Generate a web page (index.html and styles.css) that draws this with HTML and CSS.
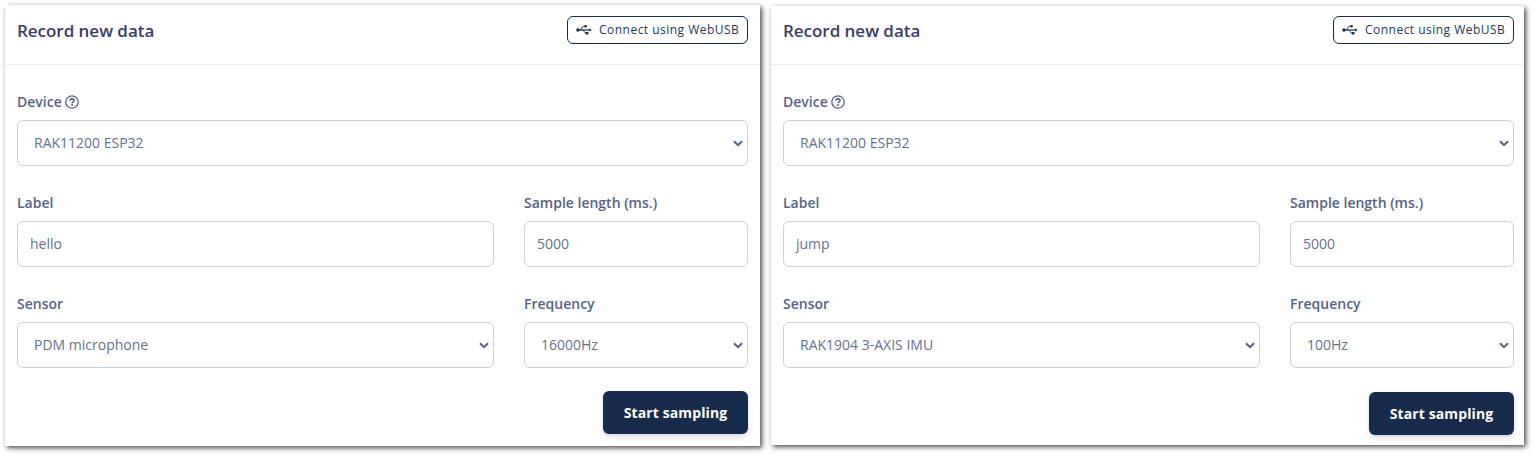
FILE: index.html
```html
<!DOCTYPE html>
<html lang="en">
<head>
<meta charset="utf-8">
<title>Record new data</title>
<link rel="stylesheet" href="styles.css">
</head>
<body>
<svg class="defs" aria-hidden="true">
  <symbol id="usb" viewBox="0 0 16 12">
    <path d="M1.5 6H14" fill="none" stroke="currentColor" stroke-width="1.2"/>
    <path d="M4 6C6 6 5.4 2.3 7.5 2.3H9.5M6.5 6C8.5 6 7.9 9.2 10 9.2H11" fill="none" stroke="currentColor" stroke-width=".9"/>
    <circle cx="1.9" cy="6" r="1.7" fill="currentColor"/>
    <circle cx="9.6" cy="2.3" r="1.3" fill="currentColor"/>
    <path d="M9.8 7.9h2.6v2.6H9.8zM13.2 4.4L15.9 6L13.2 7.6z" fill="currentColor"/>
  </symbol>
  <symbol id="help" viewBox="0 0 14 14">
    <circle cx="7" cy="7" r="6.2" fill="none" stroke="currentColor" stroke-width="1.3"/>
    <path d="M5.1 5.6C5.2 3.3 9 3.4 9 5.5C9 6.8 7.1 6.8 7.1 8.2" fill="none" stroke="currentColor" stroke-width="1.6"/>
    <circle cx="7.1" cy="10.1" r="1" fill="currentColor"/>
  </symbol>
  <symbol id="chevron" viewBox="0 0 10 7">
    <path d="M1 1.2L5 5.2L9 1.2" fill="none" stroke="currentColor" stroke-width="2"/>
  </symbol>
</svg>
<main class="panels">
  <section class="card">
    <header class="card-header">
      <h2 class="title">Record new data</h2>
      <button class="connect"><svg class="usb"><use href="#usb"/></svg>Connect using WebUSB</button>
    </header>
    <div class="form">
      <div class="field wide">
        <div class="label">Device <svg class="help"><use href="#help"/></svg></div>
        <div class="control select">RAK11200 ESP32<svg class="chevron"><use href="#chevron"/></svg></div>
      </div>
      <div class="field">
        <div class="label">Label</div>
        <div class="control">hello</div>
      </div>
      <div class="field">
        <div class="label">Sample length (ms.)</div>
        <div class="control">5000</div>
      </div>
      <div class="field">
        <div class="label">Sensor</div>
        <div class="control select">PDM microphone<svg class="chevron"><use href="#chevron"/></svg></div>
      </div>
      <div class="field">
        <div class="label">Frequency</div>
        <div class="control select">16000Hz<svg class="chevron"><use href="#chevron"/></svg></div>
      </div>
    </div>
    <footer class="actions"><button class="start">Start sampling</button></footer>
  </section>
  <section class="card second">
    <header class="card-header">
      <h2 class="title">Record new data</h2>
      <button class="connect"><svg class="usb"><use href="#usb"/></svg>Connect using WebUSB</button>
    </header>
    <div class="form">
      <div class="field wide">
        <div class="label">Device <svg class="help"><use href="#help"/></svg></div>
        <div class="control select">RAK11200 ESP32<svg class="chevron"><use href="#chevron"/></svg></div>
      </div>
      <div class="field">
        <div class="label">Label</div>
        <div class="control">jump</div>
      </div>
      <div class="field">
        <div class="label">Sample length (ms.)</div>
        <div class="control">5000</div>
      </div>
      <div class="field">
        <div class="label">Sensor</div>
        <div class="control select">RAK1904 3-AXIS IMU<svg class="chevron"><use href="#chevron"/></svg></div>
      </div>
      <div class="field">
        <div class="label">Frequency</div>
        <div class="control select">100Hz<svg class="chevron"><use href="#chevron"/></svg></div>
      </div>
    </div>
    <footer class="actions"><button class="start">Start sampling</button></footer>
  </section>
</main>
</body>
</html>
```
FILE: styles.css
```css
* { box-sizing: border-box; }
body {
  margin: 0;
  min-height: 100vh;
  background: #fff;
  color: #566386;
  font: 14px/20px "Open Sans", sans-serif;
}
.defs { display: none; }
.panels {
  display: flex;
  align-items: flex-start;
  gap: 11px;
  padding: 5px 0 9px 5px;
}
.card {
  width: 755px;
  height: 441px;
  background: #fff;
  box-shadow: 2px 2px 5px rgba(0, 0, 0, .7);
}
.card.second {
  width: 753px;
  height: 439px;
  margin-top: 1px;
}
.card-header {
  display: flex;
  justify-content: space-between;
  align-items: flex-start;
  height: 60px;
  padding: 11px 12px 0;
  border-bottom: 1px solid #eceef0;
}
.second .card-header { height: 59px; padding: 10px 10px 0 12px; }
.title {
  margin: 3px 0 0;
  color: #3b3b66;
  font-size: 17px;
  font-weight: 600;
  line-height: 24px;
  letter-spacing: -.03px;
}
.connect {
  display: flex;
  align-items: center;
  gap: 7px;
  width: 181px;
  height: 28px;
  padding: 0 0 0 8px;
  border: 1px solid #172b4d;
  border-radius: 6px;
  background: #fff;
  color: #24375a;
  font: 500 12px/18px "Open Sans", sans-serif;
  letter-spacing: .48px;
  white-space: nowrap;
}
.usb { width: 16px; height: 12px; flex: none; color: #172b4d; }
.form {
  display: grid;
  grid-template-columns: 477px 224px;
  gap: 27px 30px;
  padding: 27px 12px 0;
}
.wide { grid-column: 1 / -1; }
.label {
  display: flex;
  align-items: center;
  gap: 3px;
  height: 20px;
  margin-bottom: 8px;
  font-weight: 600;
}
.help { width: 14px; height: 14px; }
.control {
  display: flex;
  align-items: center;
  height: 46px;
  padding: 0 12px;
  border: 1px solid #cad1d7;
  border-radius: 6px;
  color: #65718f;
}
.select {
  justify-content: space-between;
  padding: 0 4px 0 16px;
}
.chevron { width: 10px; height: 7px; color: #525f7f; }
.actions {
  display: flex;
  justify-content: flex-end;
  padding: 23px 12px 0;
}
.second .actions { padding: 24px 10px 0; }
.start {
  width: 145px;
  height: 43px;
  padding: 0;
  border: 0;
  border-radius: 6px;
  background: #172b4d;
  color: #fff;
  font: 700 14px/20px "Open Sans", sans-serif;
  letter-spacing: .1px;
  box-shadow: 0 4px 6px rgba(50, 50, 93, .11), 0 1px 3px rgba(0, 0, 0, .08);
}
```
